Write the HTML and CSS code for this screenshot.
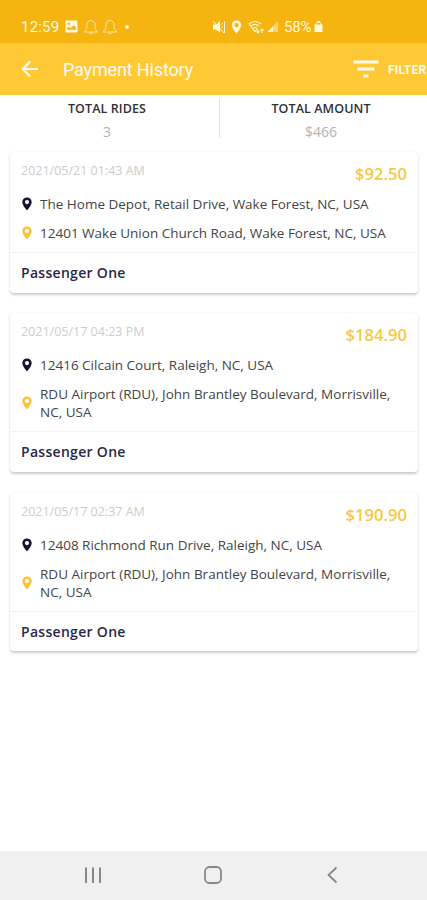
FILE: index.html
```html
<!DOCTYPE html>
<html lang="en">
<head>
<meta charset="utf-8">
<title>Payment History</title>
<link rel="stylesheet" href="styles.css">
</head>
<body>
<svg width="0" height="0" class="defs" aria-hidden="true">
  <symbol id="pin" viewBox="0 0 10 14"><path fill="currentColor" fill-rule="evenodd" d="M5 0.5C2.3 .5.3 2.5.3 5.1.3 8.5 5 13.5 5 13.5S9.700 8.500 9.700 5.100C9.700 2.500 7.700.5 5 .5ZM5 3a2.100 2.100 0 1 1 0 4.200A2.100 2.100 0 0 1 5 3Z"/></symbol>
  <symbol id="bell" viewBox="0 0 16 16"><path fill="none" stroke="currentColor" stroke-width="1" stroke-linejoin="round" d="M8 1.500C5.200 1.500 3.900 3.500 3.900 6V8.700C3.900 10.300 2 11.500 1.200 13H14.800C14 11.500 12.100 10.300 12.100 8.700V6C12.100 3.500 10.800 1.500 8 1.500ZM6 13.300C6.300 15.300 9.700 15.300 10 13.300"/></symbol>
</svg>
<div class="screen">
  <div class="status">
    <span class="clock">12:59</span>
    <svg class="photo" width="13" height="13" viewBox="0 0 13 13"><path fill="currentColor" fill-rule="evenodd" d="M1.500.5h10q1 0 1 1v10q0 1-1 1h-10q-1 0-1-1v-10q0-1 1-1ZM2 9.800H11V7.500L8.600 5.300 5.500 8.200 3.800 6.800 2 8.400ZM3.600 2.500a1.200 1.200 0 1 0 .01 0Z"/></svg>
    <svg class="bell" width="16" height="16"><use href="#bell"/></svg>
    <svg class="bell" width="16" height="16"><use href="#bell"/></svg>
    <i class="dot"></i>
    <div class="status-right">
      <svg width="14" height="14" viewBox="0 0 14 14"><path fill="currentColor" d="M1 4.500H4L8 1V12.500L4 9.500H1Z"/><path stroke="currentColor" fill="none" d="M1 1 12 13M9.500 4.500 11 3M9.500 7H11M12.500 1V13"/></svg>
      <svg class="locate" width="11" height="14"><use href="#pin"/></svg>
      <svg class="wifi" width="17" height="14" viewBox="0 0 17 14"><path fill="none" stroke="currentColor" stroke-width="1.100" d="M.8 4C4.500.6 9.500.6 13.200 4M2.800 6.200C5.500 3.900 8.500 3.900 11.200 6.200M4.800 8.400C6.300 7.200 7.700 7.200 9.200 8.400M1 4 7 11.500 9 9M10 9.500V13M8.500 11.500 10 13 11.500 11.500M14 13V9M12.500 10.500 14 9 15.500 10.500"/></svg>
      <svg class="signal" width="12" height="13" viewBox="0 0 12 13"><path fill="currentColor" opacity=".45" d="M11 1V12H.5Z"/><path fill="currentColor" d="M6 6.500V12H.5Z"/></svg>
      <span class="battery">58%</span>
      <svg class="cell" width="9" height="13" viewBox="0 0 9 13"><path fill="currentColor" d="M3 1h3v1.500h-3ZM.5 4.500H8.500V12H.5Z"/><path fill="none" stroke="currentColor" d="M2.300 5V3.500Q2.300 2 4.500 2T6.700 3.500V5"/></svg>
    </div>
  </div>
  <header class="appbar">
    <svg class="back" width="18" height="18" viewBox="0 0 18 18"><path fill="none" stroke="currentColor" stroke-width="2.100" d="M17 9H2M9.200 1.500 1.700 9 9.200 16.500"/></svg>
    <h1><span>Payment History</span></h1>
    <div class="filter">
      <svg width="26" height="18" viewBox="0 0 26 18"><path fill="currentColor" d="M.5.500h25v3H.5ZM4.500 7.500h17v3h-17ZM10.500 14.500h5v3h-5Z"/></svg>
      <span>FILTER</span>
    </div>
  </header>
  <section class="totals">
    <div><b>TOTAL RIDES</b><span>3</span></div>
    <div><b>TOTAL AMOUNT</b><span>$466</span></div>
  </section>
  <main>
    <article class="card">
      <div class="head"><time>2021/05/21 01:43 AM</time><strong>$92.50</strong></div>
      <div class="stop from"><svg width="10" height="14"><use href="#pin"/></svg><p>The Home Depot, Retail Drive, Wake Forest, NC, USA</p></div>
      <div class="stop to"><svg width="10" height="14"><use href="#pin"/></svg><p>12401 Wake Union Church Road, Wake Forest, NC, USA</p></div>
      <div class="who"><span>Passenger One</span></div>
    </article>
    <article class="card">
      <div class="head"><time>2021/05/17 04:23 PM</time><strong>$184.90</strong></div>
      <div class="stop from"><svg width="10" height="14"><use href="#pin"/></svg><p>12416 Cilcain Court, Raleigh, NC, USA</p></div>
      <div class="stop to"><svg width="10" height="14"><use href="#pin"/></svg><p>RDU Airport (RDU), John Brantley Boulevard, Morrisville,<br>NC, USA</p></div>
      <div class="who"><span>Passenger One</span></div>
    </article>
    <article class="card">
      <div class="head"><time>2021/05/17 02:37 AM</time><strong>$190.90</strong></div>
      <div class="stop from"><svg width="10" height="14"><use href="#pin"/></svg><p>12408 Richmond Run Drive, Raleigh, NC, USA</p></div>
      <div class="stop to"><svg width="10" height="14"><use href="#pin"/></svg><p>RDU Airport (RDU), John Brantley Boulevard, Morrisville,<br>NC, USA</p></div>
      <div class="who"><span>Passenger One</span></div>
    </article>
  </main>
  <nav class="navbar">
    <svg width="18" height="18" viewBox="0 0 18 18"><path stroke="currentColor" stroke-width="2" d="M2 1.500V17M9 1.500V17M16 1.500V17"/></svg>
    <svg width="18" height="18" viewBox="0 0 18 18"><rect x="1" y="1" width="16" height="16" rx="4.500" fill="none" stroke="currentColor" stroke-width="1.800"/></svg>
    <svg width="18" height="18" viewBox="0 0 18 18"><path fill="none" stroke="currentColor" stroke-width="1.800" d="M13.500 1.500 5.500 9 13.500 16.500"/></svg>
  </nav>
</div>
</body>
</html>
```
FILE: styles.css
```css
* { box-sizing: border-box; }
body { margin: 0; background: #fff; font-family: "Open Sans", sans-serif; }
h1, p { margin: 0; }
svg { display: block; flex: none; }
.defs { position: absolute; }
.screen { width: 427px; height: 900px; display: flex; flex-direction: column; overflow: hidden; }

.status { height: 43px; flex: none; padding: 10px 0 0 21px; background: #f5b40f; color: #fff8df; display: flex; align-items: center; font-family: Roboto, sans-serif; }
.clock { width: 44px; font-size: 15px; letter-spacing: .2px; }
.bell { margin-left: 5px; opacity: .75; }
.bell + .bell { margin-left: 3px; }
.dot { width: 4px; height: 4px; margin-left: 7px; border-radius: 50%; background: currentColor; }
.status-right { display: flex; align-items: center; margin-left: 83px; }
.locate { margin-left: 5px; }
.wifi { margin-left: 6px; }
.signal { margin-left: 2px; }
.battery { width: 30px; margin-left: 5px; font-size: 15px; letter-spacing: -.2px; }

.appbar { height: 52px; flex: none; padding-left: 21px; background: #ffc835; color: #fffaf0; display: flex; align-items: center; font-family: Roboto, sans-serif; }
.appbar h1 { flex: none; margin-left: 24px; width: 290px; padding-top: 1px; font-size: 18px; font-weight: 400; white-space: nowrap; letter-spacing: -.15px; }
.filter { flex: none; display: flex; align-items: center; font-size: 12px; font-weight: 700; }
.filter span { margin-left: 9px; padding-top: 1px; letter-spacing: .2px; }

.totals { height: 57px; flex: none; display: grid; grid-template-columns: 219px 1fr; padding-top: 4px; text-align: center; }
.totals div { height: 38px; padding-right: 5px; display: flex; flex-direction: column; }
.totals div + div { border-left: 1px solid #ddd; }
.totals b { font-size: 12.500px; font-weight: 600; line-height: 20px; letter-spacing: .1px; color: #303036; white-space: nowrap; }
.totals span { font-size: 14px; line-height: 26px; color: #b3b3b3; }

main { flex: 1; padding: 0 9px 0 10px; display: flex; flex-direction: column; gap: 20.500px; }
.card { border-radius: 4px; background: #fff; box-shadow: 0 1.500px 2.500px rgba(0,0,0,.2); }
.head { height: 43px; padding: 8px 11px 0; display: flex; justify-content: space-between; }
.head time { font-size: 12.500px; line-height: 22px; color: #ccc; }
.head strong { font-size: 16.600px; line-height: 28px; font-weight: 600; color: #f8c83f; }
.stop { display: flex; align-items: center; padding: 0 12px; }
.stop + .stop { margin-top: 11px; }
.stop p { margin-left: 8px; font-size: 13.500px; line-height: 18px; color: #444; white-space: nowrap; }
.from svg { color: #171331; }
.to svg { color: #fac338; }
.who { height: 40.800px; margin-top: 10px; padding: 0 11px; border-top: 1px solid #f3f3f3; font-size: 14px; letter-spacing: .3px; line-height: 39px; font-weight: 600; color: #2b2744; }

.navbar { height: 49px; flex: none; padding: 0 86px 1px 84px; display: flex; align-items: center; justify-content: space-between; background: #f0f0f0; color: #888; }
```
